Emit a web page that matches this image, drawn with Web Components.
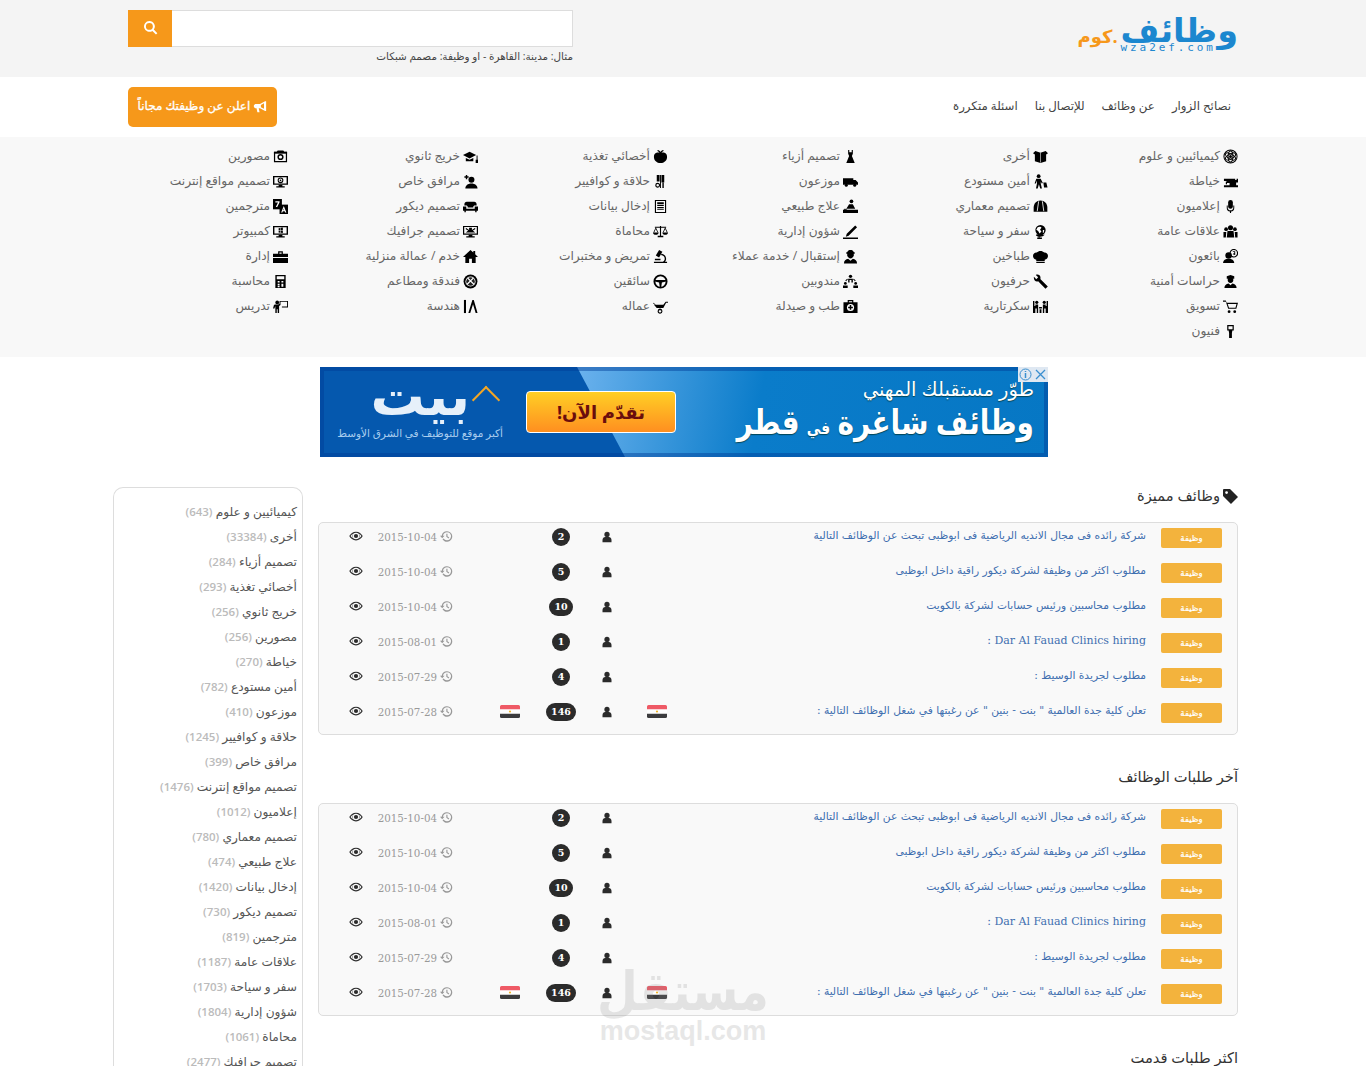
<!DOCTYPE html>
<html lang="ar" dir="rtl">
<head>
<meta charset="utf-8">
<title>وظائف</title>
<style>
    html, body { margin: 0; padding: 0; height: 1066px; overflow: hidden; background: #fff; }
    body { position: relative; font-family: "Open Sans", "DejaVu Sans", sans-serif; font-size: 13px; color: #555; }
</style>
</head>
<body>
<wz-top></wz-top>
<wz-nav></wz-nav>
<wz-categories></wz-categories>
<wz-ad></wz-ad>
<wz-main>
    <wz-sidebar slot="side"></wz-sidebar>
    <wz-section tagged title="وظائف مميزة"><wz-jobs></wz-jobs></wz-section>
    <wz-section title="آخر طلبات الوظائف"><wz-jobs></wz-jobs></wz-section>
    <wz-section title="اكثر طلبات قدمت"></wz-section>
</wz-main>
<wz-watermark></wz-watermark>

<script>
// icons, 16x16 box, all filled unless the shape says otherwise
const ICONS = {
    atom: '<g fill="none" stroke="#000" stroke-width="1.1"><circle cx="8" cy="8" r="7"/><ellipse cx="8" cy="8" rx="6" ry="2.6" transform="rotate(30 8 8)"/><ellipse cx="8" cy="8" rx="6" ry="2.6" transform="rotate(-30 8 8)"/><ellipse cx="8" cy="8" rx="6" ry="2.6" transform="rotate(90 8 8)"/></g><circle cx="8" cy="8" r="1.6"/>',
    sewing: '<path d="M1 5h12v1.5h1.500V5H16v4h-2v3h2v2H1v-2h6V9.500H4V7.500H1z"/><path d="M3 8h1.300v3H3z"/>',
    mic: '<rect x="5.500" y="1" width="5" height="9.500" rx="2.500"/><path d="M4 7h1v2a3 3 0 0 0 6 0V7h1v2.500a4 4 0 0 1-3.400 3.900V15H7.400v-1.600A4 4 0 0 1 4 9.500z"/>',
    group: '<circle cx="8" cy="4" r="2.700"/><circle cx="3.300" cy="5.500" r="2"/><circle cx="12.700" cy="5.500" r="2"/><path d="M4.800 7.500h6.400l.8 7H4z"/><path d="M.5 8.500h3l-.5 6H.5zM12.500 8.500h3v6H13z"/>',
    bubble: '<circle cx="6" cy="7" r="3.500"/><path d="M0 15c.3-3 2.500-4.500 6-4.500s5.700 1.500 6 4.500z"/><circle cx="11.500" cy="4.500" r="4" fill="none" stroke="#000" stroke-width="1.200"/><path d="M10.500 2.500h2.500v4h-2.500V5.800H12V5h-1V4.200h1v-1h-1.500z"/>',
    guard: '<path d="M4 2.500 8 1l4 1.500V5H4z"/><circle cx="8" cy="6.500" r="3"/><path d="M1.500 15c0-3 1.800-4.500 4.500-5l2 2 2-2c2.700.5 4.500 2 4.500 5z"/>',
    cart: '<path d="M0 1.500h3l.8 2.500H16l-1.800 6.500H5.500L3 3H0zM5 5.300l1.400 4h6.900l1.100-4z"/><circle cx="6.500" cy="13.500" r="1.500"/><circle cx="12.500" cy="13.500" r="1.500"/>',
    plug: '<path d="M4.500 1h7v6h-1.500l-.5 2.500v5.500H6.500V9.500L6 7H4.500zM5.800 2.300v3.400h4.400V2.300z"/>',
    box: '<path d="M8 4 2.500 2 0 4.500l2 1.300V13l6 1.800 6-1.800V5.800l2-1.300L13.500 2z"/><path d="M8 4v10.500" stroke="#fff" stroke-width=".6"/>',
    walker: '<circle cx="6" cy="2.300" r="2"/><path d="M3.500 5h4.700l2.300 4.500-1.200.6L8.300 8v2.500l1.200 5H7.700L6.300 11l-1.300 4.500H3.200l1-5.500V7L3 10H1.700zM11 9h3.200l1.300 5.500h-3.700z"/>',
    helmet: '<path d="M8 1.500c4.200 0 7.300 3.200 7.300 7.500v4.500H.7V9C.7 4.700 3.800 1.500 8 1.500z"/><path d="M6 2.500 4.500 13M10 2.500 11.500 13" stroke="#fff" stroke-width=".9"/>',
    globe: '<circle cx="8" cy="6.500" r="5.500"/><path d="M5 3.500c1.500-1 3.500-1 4 .5L7.500 6 9 8 7 10 5.500 7.500 3.500 6zM10.500 6.500h1.500l-.5 2.500-1 .5z" fill="#fff"/><path d="M12.500 11.500A6.500 6.500 0 0 1 7 13.500V14.500h2.500V16h-5v-1.500H6v-1A6.500 6.500 0 0 1 3 12l1-1z"/>',
    chef: '<path d="M3.500 11.500C1.500 11 0 9.500 0 7.500 0 5.200 2 3.500 4 3.800 5 2.500 6.500 2 8 2s3 .5 4 1.800c2-.3 4 1.400 4 3.700 0 2-1.500 3.500-3.500 4v1.200h-9zM3.500 13.500h9V15h-9z"/>',
    wrench: '<path d="M1 3 3.500 5.500 5.500 3.500 3 1C5-.2 8 1 8 4c0 .5 0 1-.2 1.400l8 7.800-2.500 2.500-7.800-8C3 9 .3 6 1 3z"/>',
    secretary: '<circle cx="4" cy="3.500" r="1.700"/><circle cx="12" cy="3.500" r="1.700"/><path d="M0 2h1.500v5.500h1V5.800h3v9H4V10H2.500v4.800H0zM16 2h-1.500v5.500h-1V5.800h-3v9H12V10h1.500v4.800H16zM6.500 8.500h3v1.500h-3zM7 11h2v3.800H7z"/>',
    dress: '<path d="M5.500 1h1.200v2.500h2.600V1h1.200v4L9.500 7.500 12.500 15h-9L6.500 7.500 5.500 5z"/>',
    truck: '<path d="M0 4.500h11v2h2.500L16 9v2.500H0z"/><circle cx="3.500" cy="12" r="1.600"/><circle cx="12.500" cy="12" r="1.600"/>',
    physio: '<circle cx="9" cy="2.500" r="2"/><path d="M6.500 5.500h4l2.500 5H3.500zM0 11.500h16V15H0z"/><path d="M1 10.500h3v1H1z"/>',
    pen: '<path d="M13 1.500l2 2-9 9-3 1 1-3zM0 14.500h16V16H0z"/>',
    reception: '<path d="M4.500 3.500C5 1.500 6.300 1 8 1s3 .5 3.500 2.500V7c-.5 2-2 3-3.500 3S5 9 4.500 7z"/><path d="M3.500 3.500h9v1.500h-9zM1 15.500c0-3 2-4.500 4.500-5L8 12.500l2.500-2c2.500.5 4.500 2 4.500 5z"/>',
    network: '<circle cx="8" cy="2.500" r="1.800"/><path d="M5.500 5h5v4H9V6.500H7V9H5.500z"/><path d="M2.500 7.300C3 6 4 5.300 5 5v1.200c-.7.3-1.200.8-1.500 1.600zM13.500 7.300C13 6 12 5.300 11 5v1.200c.7.3 1.200.8 1.500 1.600z"/><circle cx="2.500" cy="10" r="1.500"/><circle cx="13.500" cy="10" r="1.500"/><path d="M0 12.200h5V15H0zM11 12.200h5V15h-5z"/>',
    medical: '<path d="M5 1h6v2.500h4.500V15H.5V3.500H5zM6.300 2.300v1.200h3.400V2.300z"/><circle cx="8" cy="9" r="3.800" fill="#fff"/><path d="M7.200 6.500h1.600v1.700h1.700v1.600H8.800v1.700H7.200V9.800H5.500V8.200h1.700z"/>',
    apple: '<path d="M5 1c1.500.3 2.500 1 3 2.200.5-1 1.500-2 3-2.200l.3 1.200c-1 .4-1.800 1-2.300 2C11 3.200 15 4 15 8.500c0 3.700-3 6.500-7 6.500s-7-2.800-7-6.500C1 4 5 3.200 7 4.200 6.500 3.200 5.700 2.600 4.700 2.200z"/>',
    scissors: '<path d="M4 1h3v7H4zM9 1h3v8H9z"/><path d="M7.500 1h1v14h-1z"/><circle cx="5" cy="12" r="2" fill="none" stroke="#000" stroke-width="1.200"/><path d="M10 9h1.500v6H10z"/>',
    doc: '<path d="M2 1h12v14H2zM3.200 2.200v11.600h9.600V2.200z"/><path d="M4.500 3.500h7v2h-7zM4.500 6.500h7v1h-7zM4.500 8.500h7v1h-7zM4.500 10.500h7v1h-7z"/>',
    scales: '<path d="M7.400 2h1.200v10.500H11V14H5v-1.500h2.400zM2 3h12v1H2z"/><path d="M3 3.500.3 9h.9L3 5.300 4.800 9h.9zM13 3.500 10.300 9h.9L13 5.300 14.800 9h.9z"/><path d="M0 9h6c0 1.500-1.300 2.500-3 2.500S0 10.500 0 9zM10 9h6c0 1.500-1.300 2.500-3 2.500S10 10.500 10 9z"/>',
    microscope: '<path d="M6.500 1l3.500 2-3.500 6-3.500-2z"/><path d="M9 5c3 .5 5 2.700 5 5.300 0 1.300-.5 2.500-1.300 3.200H15V15H1v-1.500h9.500c1.200-.7 2-1.900 2-3.200 0-1.800-1.400-3.400-4-3.800zM2 10.500h6V12H2z"/>',
    wheel: '<circle cx="8" cy="8" r="6.500" fill="none" stroke="#000" stroke-width="2"/><path d="M2 6.500h12L14 8 9.500 9 8.700 14h-1.400L6.500 9 2 8z"/>',
    barrow: '<path d="M1 6h10l2.500-3H16v1h-2l-3 5.500H4zM6.500 10.500h2V12h-2z"/><circle cx="7.500" cy="13" r="2" fill="none" stroke="#000" stroke-width="1.200"/><path d="M2 6 0 4.500l.5-.5L3 6z"/>',
    grad: '<path d="M7 3 0 6.500 7 10l7-3.500z"/><path d="M3 9.500l4 2 4-2V13H3zM14.500 7h1v4.500h1V15h-3v-3.500h1z"/>',
    assistant: '<circle cx="9" cy="6" r="3.200"/><path d="M2.500 15.500c0-3.200 2.500-5.500 6.500-5.500s6.500 2.300 6.500 5.500zM3 1h1.500v1.500H6V4H4.500v1.500H3V4H1.500V2.500H3z"/>',
    sofa: '<path d="M4 3h8c1.500 0 2.500 1 2.500 2.500V7H12.500c-.8 0-1.500.7-1.500 1.500V9H5v-.5C5 7.700 4.300 7 3.500 7H1.500V5.500C1.500 4 2.500 3 4 3z"/><path d="M0 8h3.500v2.500h9V8H16v4.500h-1.500V14H13v-1.500H3V14H1.500v-1.500H0z"/>',
    monitorx: '<path d="M0 2h16v9.500H0zM1.300 3.300v6.900h13.400V3.300z"/><path d="M3 4l3.500 2.500V4h3v2.500L13 4v1.500L10.500 7 13 9H3l2.500-2L3 5.500z"/><path d="M6 11.500h4V13h2.500v1.500h-9V13H6z"/>',
    home: '<path d="M8 1 0 8.500h2.500V15h4v-4.500h3V15h4V8.500H16L13 5.700V2h-2v1.800z"/>',
    cutlery: '<circle cx="8" cy="8" r="7.400"/><circle cx="8" cy="8" r="5.400" fill="#fff"/><circle cx="8" cy="8" r="4.600" fill="#222"/><path d="M4.800 4.200 11.800 11.200M11.200 4.200 4.200 11.200" stroke="#fff" stroke-width="1.300"/>',
    compass: '<path d="M1 1h2.200v14H1z"/><path d="M10 1h1.500L15.500 15H13.500L10.700 5.500 7.700 15H5.700z"/>',
    camera: '<path d="M1 3h3l1-1.500h6L12 3h3v11H1zM2.300 4.300v8.400h11.400V4.300z"/><path d="M1 3h14v2H1z"/><circle cx="8" cy="8.500" r="3.300"/><circle cx="8" cy="8.500" r="1.700" fill="#fff"/>',
    monitorat: '<path d="M0 2h16v9.500H0zM1.500 3.500v6.500h13V3.500z"/><path d="M6 11.500h4V13h2.500v1.500h-9V13H6z"/><circle cx="8" cy="6.700" r="2.500" fill="none" stroke="#000" stroke-width="1.100"/><circle cx="8" cy="6.700" r=".9"/>',
    translate: '<path d="M0 0h9.500v11H0z"/><path d="M2.500 2.500h4.500v1L4.500 8.500H3l2.300-4.700H2.500z" fill="#fff"/><path d="M7 6h9v10H7z"/><path d="M11.500 7.500 14.300 14.500H13l-.5-1.500h-2l-.5 1.500H8.700zM11 12h1L11.500 10.300z" fill="#fff"/>',
    monitorwin: '<path d="M0 2h16v9.500H0zM1.500 3.500v6.500h13V3.500z"/><path d="M6 4.500 7.800 4.200V6.500H6zM8.300 4.100 10.500 3.800V6.500H8.300zM6 7h1.800v2.300L6 9zM8.300 7h2.200v2.700L8.300 9.300z"/><path d="M6 11.500h4V13h2.500v1.500h-9V13H6z"/>',
    brief: '<path d="M5.500 2.500h5V5H16v3.500H0V5h5.500zM6.800 3.700V5h2.400V3.700zM0 9.500h16V15H0z"/>',
    calc: '<path d="M2.500 1h11v14h-11zM4 2.500v3h8v-3z"/><path d="M5 7.500h2v1.500H5zM9 7.500h2v1.500H9zM5 10.500h2V12H5zM9 10.500h2v3H9zM5 12.500h2V14H5z" fill="#fff"/>',
    teacher: '<circle cx="4.500" cy="3.700" r="2"/><path d="M7 2h9v7H9.500V8H15V3H8V6.500L6.500 7.500V15H5V11H4v4H2.500V7.500L1.500 10H0l1-3.500 1-.7h3.500L7 5z"/>',
    eye: '<path d="M8 3C4.500 3 1.800 5.200.3 8c1.500 2.800 4.200 5 7.700 5s6.200-2.200 7.700-5C14.200 5.200 11.500 3 8 3zm0 8.800A3.800 3.800 0 1 1 8 4.200a3.800 3.800 0 0 1 0 7.600zM1.800 8c.7-1 1.600-2 2.700-2.700A5 5 0 0 0 4.500 10.700 8 8 0 0 1 1.800 8zm9.700-2.700c1.100.7 2 1.700 2.700 2.700-.7 1-1.600 2-2.700 2.700a5 5 0 0 0 0-5.400z"/><circle cx="8" cy="8" r="2.400"/>',
    history: '<path d="M8.500 1.500a6.500 6.500 0 1 1-5.400 10l1.300-1a5 5 0 1 0-.8-3.500h2L2.700 10 0 7h2.100A6.500 6.500 0 0 1 8.500 1.500z"/><path d="M7.800 4.500h1.400v3.200l2.200 1.600-.8 1.100-2.800-2z"/>',
    user: '<circle cx="8" cy="4.500" r="3.500"/><path d="M2 15v-3c0-2.500 1.800-4 3.500-4h5c1.700 0 3.500 1.500 3.500 4v3z"/>',
    search: '<path d="M6.800 1a5.800 5.800 0 0 1 4.700 9.200l3.800 3.800-1.500 1.500-3.800-3.800A5.800 5.800 0 1 1 6.800 1zm0 2.100a3.700 3.700 0 1 0 0 7.400 3.700 3.700 0 0 0 0-7.400z"/>',
    horn: '<path d="M15 1.500v11h-1.200L8 9.500H6.500l1 4.500H5L4 9.500H2.500L1 8V6l1.500-1.500H8L13.800 1.500z"/><path d="M9 5.800l3.600-2v6.300L9 8.200z" fill="#f6981a"/>',
    tag: '<path d="M0 1v6.500l8.500 8.500 7.500-7.500L7.500 0H1a1 1 0 0 0-1 1zm3.800 1.300a1.500 1.500 0 1 1 0 3 1.500 1.500 0 0 1 0-3z"/>'
};

function icon(name, size, color) {
    return `<svg viewBox="0 0 16 16" width="${size}" height="${size}" fill="${color || '#000'}" aria-hidden="true">${ICONS[name]}</svg>`;
}

const ARABIC = `"Open Sans", "DejaVu Sans", sans-serif`;

class WzTop extends HTMLElement {
    connectedCallback() {
        this.attachShadow({mode: 'open'}).innerHTML = `
        <style>
            :host { display: flex; justify-content: space-between; height: 77px; padding: 0 128px; background: #f4f4f4; box-sizing: border-box; }
            .logo { display: flex; align-items: flex-start; padding-top: 10px; }
            .name { display: flex; flex-direction: column; align-items: flex-end; color: #1c87cf; }
            .word { font: bold 33.500px/38px ${ARABIC}; }
            .latin { font: 11px/10px "DejaVu Sans Mono", monospace; letter-spacing: 2.900px; direction: ltr; margin-top: -5px; }
            .dot { font: bold 18px/20px ${ARABIC}; color: #f6981a; margin: 16px 3px 0 0; }
            .search { width: 445px; padding-top: 10px; }
            form { display: flex; direction: ltr; height: 37px; margin: 0; background: #fff; border: 1px solid #ddd; border-left: 0; box-sizing: border-box; }
            button { width: 44px; margin: -1px 0; padding: 0; border: 0; background: #f6981a; }
            input { flex: 1; border: 0; min-width: 0; background: transparent; }
            p { margin: 2px 0 0; font: 10.400px/14px ${ARABIC}; color: #444; }
        </style>
        <div class="logo">
            <div class="name"><span class="word">وظائف</span><span class="latin">wza2ef.com</span></div>
            <span class="dot">.كوم</span>
        </div>
        <div class="search">
            <form><button type="button">${icon('search', 15, '#fff')}</button><input type="text"></form>
            <p>مثال: مدينة: القاهرة - او وظيفة: مصمم شبكات</p>
        </div>`;
    }
}
customElements.define('wz-top', WzTop);

class WzNav extends HTMLElement {
    connectedCallback() {
        this.attachShadow({mode: 'open'}).innerHTML = `
        <style>
            :host { display: flex; justify-content: space-between; align-items: center; height: 60px; padding: 0 128px; box-sizing: border-box; }
            nav { display: flex; gap: 17px; padding-right: 7px; margin-top: -4px; font: 11.800px/20px ${ARABIC}; color: #444; }
            a { display: flex; align-items: center; gap: 3px; height: 40px; padding: 0 9.500px; background: #f6981a; color: #fff; border-radius: 5px; font: 12px/36px ${ARABIC}; -webkit-text-stroke: .3px #fff; }
            a span { margin-top: -2px; }
        </style>
        <nav><span>نصائح الزوار</span><span>عن وظائف</span><span>للإتصال بنا</span><span>اسئلة متكررة</span></nav>
        <a>${icon('horn', 14, '#fff')}<span>اعلن عن وظيفتك مجاناً</span></a>`;
    }
}
customElements.define('wz-nav', WzNav);

const CATEGORIES = [
    ['atom', 'كيميائيين و علوم'], ['box', 'أخرى'], ['dress', 'تصميم أزياء'], ['apple', 'أخصائي تغذية'], ['grad', 'خريج ثانوي'], ['camera', 'مصورين'],
    ['sewing', 'خياطة'], ['walker', 'أمين مستودع'], ['truck', 'موزعون'], ['scissors', 'حلاقة و كوافيير'], ['assistant', 'مرافق خاص'], ['monitorat', 'تصميم مواقع إنترنت'],
    ['mic', 'إعلاميون'], ['helmet', 'تصميم معماري'], ['physio', 'علاج طبيعي'], ['doc', 'إدخال بيانات'], ['sofa', 'تصميم ديكور'], ['translate', 'مترجمين'],
    ['group', 'علاقات عامة'], ['globe', 'سفر و سياحة'], ['pen', 'شؤون إدارية'], ['scales', 'محاماة'], ['monitorx', 'تصميم جرافيك'], ['monitorwin', 'كمبيوتر'],
    ['bubble', 'بائعون'], ['chef', 'طباخين'], ['reception', 'إستقبال / خدمة عملاء'], ['microscope', 'تمريض و مختبرات'], ['home', 'خدم / عمالة منزلية'], ['brief', 'إدارة'],
    ['guard', 'حراسات أمنية'], ['wrench', 'حرفيون'], ['network', 'مندوبين'], ['wheel', 'سائقين'], ['cutlery', 'فندقة ومطاعم'], ['calc', 'محاسبة'],
    ['cart', 'تسويق'], ['secretary', 'سكرتارية'], ['medical', 'طب و صيدلة'], ['barrow', 'عماله'], ['compass', 'هندسة'], ['teacher', 'تدريس'],
    ['plug', 'فنيون']
];

class WzCategories extends HTMLElement {
    connectedCallback() {
        const cells = CATEGORIES.map(c => `<a>${icon(c[0], 15)}<span>${c[1]}</span></a>`).join('');
        this.attachShadow({mode: 'open'}).innerHTML = `
        <style>
            :host { display: block; height: 220px; padding: 7px 128px 0; background: #f8f8f8; box-sizing: border-box; }
            .grid { display: grid; grid-template-columns: repeat(6, 190px); grid-auto-rows: 25px; justify-content: start; }
            a { display: flex; align-items: center; gap: 3px; font: 12.200px/24px ${ARABIC}; color: #666; white-space: nowrap; }
            span { margin-top: -2px; }
            svg { flex: none; }
        </style>
        <div class="grid">${cells}</div>`;
    }
}
customElements.define('wz-categories', WzCategories);

class WzAd extends HTMLElement {
    connectedCallback() {
        this.attachShadow({mode: 'open'}).innerHTML = `
        <style>
            :host { display: block; width: 728px; height: 90px; margin: 10px auto 0; position: relative; left: 1px;
                    background: #0558ae; font-family: ${ARABIC}; color: #fff; }
            .shine { position: absolute; inset: 0; clip-path: polygon(257px 0, 100% 0, 100% 100%, 305px 100%);
                     background: linear-gradient(100deg, #6db3ee 34%, #0a7cca 60%, #0677c4 100%); }
            .frame { position: absolute; inset: 0; border: 4px solid rgba(0, 60, 150, .45); }
            .row { position: relative; display: grid; grid-template-columns: 372px 150px 1fr; height: 100%; align-items: center; }
            .pitch { padding-right: 14px; }
            .pitch div:first-child { font: 19.500px/24px ${ARABIC}; text-shadow: 0 1px 1px #045; }
            .pitch div:last-child { font: bold 28px/40px ${ARABIC}; text-shadow: 0 1px 1px #045; white-space: nowrap; transform: scaleY(1.2); }
            .pitch small { font-size: 14px; }
            .go { height: 42px; border: 1px solid #fff; border-radius: 4px; box-sizing: border-box; display: flex; align-items: center; justify-content: center;
                  background: linear-gradient(#ffcf25, #ff8f20); color: #6a0d0d; font: bold 18px/1 ${ARABIC}; }
            .brand { display: flex; flex-direction: column; align-items: flex-start; position: relative; margin-right: 23px; padding-bottom: 12px; }
            .brand b { font: bold 54px/44px ${ARABIC}; color: #e6f0fa; margin-right: 33px; }
            .brand i { position: absolute; top: 18px; right: 7.500px; width: 20px; height: 20px; box-sizing: border-box; border: solid #f5a623; border-width: 2px 0 0 2px; transform: rotate(45deg); }
            .brand span { margin-top: 10px; font: 10.500px/14px ${ARABIC}; color: #a9cdee; white-space: nowrap; }
            .close { position: absolute; top: 0; right: 0; display: flex; background: #dfe8f2; height: 15px; }
            .close span { width: 15px; height: 15px; display: block; }
            svg { display: block; }
        </style>
        <div class="shine"></div>
        <div class="frame"></div>
        <div class="row">
            <div class="pitch"><div>طوّر مستقبلك المهني</div><div>وظائف شاغرة <small>في</small> قطر</div></div>
            <div class="go">تقدّم الآن!</div>
            <div class="brand"><b>بيت</b><i></i><span>أكبر موقع للتوظيف في الشرق الأوسط</span></div>
        </div>
        <div class="close">
            <span><svg viewBox="0 0 15 15" width="15" height="15" fill="none" stroke="#3a8fd0"><path d="M3 3l9 9M12 3l-9 9" stroke-width="1.300"/></svg></span>
            <span><svg viewBox="0 0 15 15" width="15" height="15" fill="none" stroke="#3a8fd0"><circle cx="7.500" cy="7.500" r="5.500"/><path d="M7.500 6v5M7.500 4v1" stroke-width="1.500"/></svg></span>
        </div>`;
    }
}
customElements.define('wz-ad', WzAd);

class WzMain extends HTMLElement {
    connectedCallback() {
        this.attachShadow({mode: 'open'}).innerHTML = `
        <style>
            :host { display: grid; grid-template-columns: 920px 190px; column-gap: 15px; justify-content: start; margin: 30px 128px 0 0; }
            .side { grid-column: 2; grid-row: 1; }
            .content { grid-column: 1; grid-row: 1; display: flex; flex-direction: column; gap: 33px; }
        </style>
        <div class="content"><slot></slot></div>
        <div class="side"><slot name="side"></slot></div>`;
    }
}
customElements.define('wz-main', WzMain);

const SIDE_ITEMS = [
    ['كيميائيين و علوم', 643], ['أخرى', 33384], ['تصميم أزياء', 284], ['أخصائي تغذية', 293], ['خريج ثانوي', 256], ['مصورين', 256],
    ['خياطة', 270], ['أمين مستودع', 782], ['موزعون', 410], ['حلاقة و كوافيير', 1245], ['مرافق خاص', 399], ['تصميم مواقع إنترنت', 1476],
    ['إعلاميون', 1012], ['تصميم معماري', 780], ['علاج طبيعي', 474], ['إدخال بيانات', 1420], ['تصميم ديكور', 730], ['مترجمين', 819],
    ['علاقات عامة', 1187], ['سفر و سياحة', 1703], ['شؤون إدارية', 1804], ['محاماة', 1061], ['تصميم جرافيك', 2477]
];

class WzSidebar extends HTMLElement {
    connectedCallback() {
        const rows = SIDE_ITEMS.map(r => `<li>${r[0]} <em>(${r[1]})</em></li>`).join('');
        this.attachShadow({mode: 'open'}).innerHTML = `
        <style>
            :host { display: block; border: 1px solid #ddd; border-radius: 10px 10px 0 0; border-bottom: 0; height: 700px; box-sizing: border-box; }
            ul { list-style: none; margin: 0; padding: 11px 5px 0 0; }
            li { font: 12.200px/25px ${ARABIC}; color: #555; white-space: nowrap; }
            em { font: 600 11.500px/25px "Open Sans", sans-serif; color: #bbb; font-style: normal; }
        </style>
        <ul>${rows}</ul>`;
    }
}
customElements.define('wz-sidebar', WzSidebar);

class WzSection extends HTMLElement {
    connectedCallback() {
        const tag = this.hasAttribute('tagged') ? icon('tag', 15, '#222') : '';
        this.attachShadow({mode: 'open'}).innerHTML = `
        <style>
            :host { display: block; }
            h2 { display: flex; align-items: center; gap: 3px; height: 18px; margin: 0 0 17px; font: normal 14.700px/18px ${ARABIC}; color: #333; }
            span { margin-top: -2px; }
        </style>
        <h2>${tag}<span>${this.getAttribute('title')}</span></h2>
        <slot></slot>`;
    }
}
customElements.define('wz-section', WzSection);

const JOBS = [
    {t: 'شركة رائده فى مجال الانديه الرياضية فى ابوظبى تبحث عن الوظائف التالية', d: '2015-10-04', n: 2},
    {t: 'مطلوب اكثر من وظيفة لشركة ديكور راقية داخل ابوظبى', d: '2015-10-04', n: 5},
    {t: 'مطلوب محاسبين ورئيس حسابات لشركة بالكويت', d: '2015-10-04', n: 10},
    {t: 'Dar Al Fauad Clinics hiring :', d: '2015-08-01', n: 1, latin: true},
    {t: 'مطلوب لجريدة الوسيط :', d: '2015-07-29', n: 4},
    {t: 'تعلن كلية جدة العالمية " بنت - بنين " عن رغبتها في شغل الوظائف التالية :', d: '2015-07-28', n: 146, flag: true}
];

const FLAG = `<svg width="20" height="13" viewBox="0 0 20 13"><rect width="20" height="13" rx="1.500" fill="#fff"/><path d="M0 1.500A1.500 1.500 0 0 1 1.500 0h17A1.500 1.500 0 0 1 20 1.500V4.300H0z" fill="#ef5a66"/><path d="M0 8.700h20v2.800a1.500 1.500 0 0 1-1.500 1.500h-17A1.500 1.500 0 0 1 0 11.500z" fill="#3c3c3e"/><circle cx="10" cy="6.500" r="1.100" fill="#f0b429"/></svg>`;

class WzJobs extends HTMLElement {
    connectedCallback() {
        const rows = JOBS.map(j => `
            <div class="row">
                <span class="label">وظيفة</span>
                <a class="title${j.latin ? ' latin' : ''}">${j.t}</a>
                <span class="cell">${j.flag ? FLAG : ''}</span>
                <span class="cell">${icon('user', 12, '#2b2b2b')}</span>
                <span class="cell"><b class="count">${j.n}</b></span>
                <span class="cell">${j.flag ? FLAG : ''}</span>
                <span class="date">${icon('history', 13, '#999')}<time>${j.d}</time></span>
                <span class="cell eye">${icon('eye', 14, '#2b2b2b')}</span>
            </div>`).join('');
        this.attachShadow({mode: 'open'}).innerHTML = `
        <style>
            :host { display: block; height: 213px; padding-bottom: 2px; background: #f9f9f9; border: 1px solid #ddd; border-radius: 5px; box-sizing: border-box; }
            .row { display: grid; grid-template-columns: 61px 481px 46px 54px 38px 64px 110px 24px; height: 35px; padding: 0 15px 8px 0; box-sizing: border-box; align-items: center; }
            .label { height: 20px; margin-top: 3px; background: #f3b33d; border-radius: 2px; color: #fff; font: 8.500px/20px ${ARABIC}; -webkit-text-stroke: .2px #fff; text-align: center; }
            .title { padding: 0 15px 2px 0; font: 10.700px/16px "DejaVu Serif", "DejaVu Sans", serif; color: #3f6fb0; white-space: nowrap; }
            .title.latin { font-size: 11px; }
            .cell { display: flex; justify-content: center; align-items: center; }
            .cell svg { display: block; }
            .count { min-width: 18px; height: 18px; padding: 0 5px; box-sizing: border-box; border-radius: 9px; background: #2b2b2b; color: #fff; font: bold 9.500px/18px "DejaVu Serif", serif; text-align: center; }
            .date { display: flex; align-items: center; gap: 3px; padding-right: 25px; color: #999; font: 10.300px/14px "DejaVu Serif", serif; }
            time { direction: ltr; }
            .eye { margin-top: -1px; }
        </style>
        ${rows}`;
    }
}
customElements.define('wz-jobs', WzJobs);

class WzWatermark extends HTMLElement {
    connectedCallback() {
        this.attachShadow({mode: 'open'}).innerHTML = `
        <style>
            :host { position: absolute; left: 590px; top: 962px; width: 186px; text-align: center; color: #8a8a8a; opacity: .2; pointer-events: none; }
            div { font: bold 47px/54px ${ARABIC}; transform: scaleY(1.15); }
            span { display: block; font: bold 27px/30px "Liberation Sans", sans-serif; direction: ltr; }
        </style>
        <div>مستقل</div><span>mostaql.com</span>`;
    }
}
customElements.define('wz-watermark', WzWatermark);
</script>
</body>
</html>
